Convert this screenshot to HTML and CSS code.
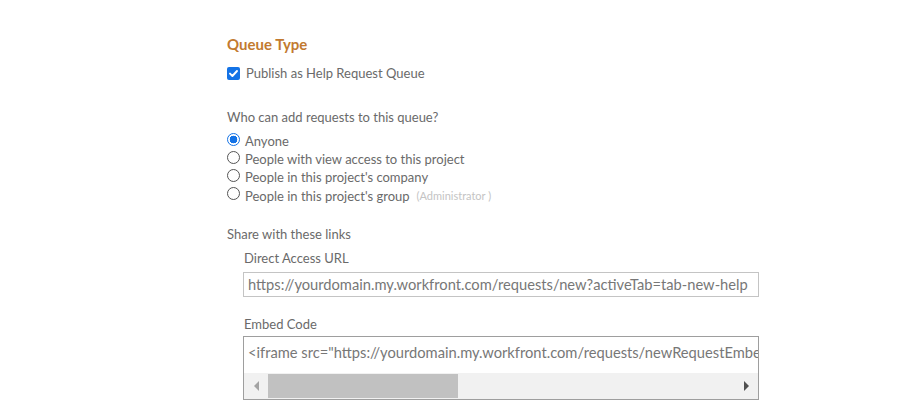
FILE: index.html
```html
<!DOCTYPE html>
<html>
<head>
<meta charset="utf-8">
<link rel="stylesheet" href="styles.css">
</head>
<body>
<div class="page">
  <h2 class="title">Queue Type</h2>
  <label class="check-row">
    <span class="checkbox"><svg width="13" height="13" viewBox="0 0 13 13"><rect x="0" y="0" width="13" height="13" rx="2" fill="#1473e6"/><path d="M3 6.6 L5.4 9 L10 4" fill="none" stroke="#fff" stroke-width="1.9" stroke-linecap="round" stroke-linejoin="round"/></svg></span>
    <span>Publish as Help Request Queue</span>
  </label>

  <div class="question">Who can add requests to this queue?</div>
  <div class="radios">
    <div class="radio-row"><span class="radio checked"></span><span>Anyone</span></div>
    <div class="radio-row"><span class="radio"></span><span>People with view access to this project</span></div>
    <div class="radio-row"><span class="radio"></span><span>People in this project's company</span></div>
    <div class="radio-row"><span class="radio"></span><span>People in this project's group</span><span class="muted">(Administrator )</span></div>
  </div>

  <div class="share">Share with these links</div>
  <div class="links">
    <div class="field-label">Direct Access URL</div>
    <div class="input">https://yourdomain.my.workfront.com/requests/new?activeTab=tab-new-help</div>
    <div class="field-label embed-label">Embed Code</div>
    <div class="textarea">
      <div class="ta-text">&lt;iframe src="https://yourdomain.my.workfront.com/requests/newRequestEmbed?activeTab=tab-new-help"&gt;&lt;/iframe&gt;</div>
      <div class="hscroll">
        <span class="arrow left"></span>
        <div class="track"><div class="thumb"></div></div>
        <span class="arrow right"></span>
      </div>
    </div>
  </div>
</div>
</body>
</html>
```
FILE: styles.css
```css
html, body {
  margin: 0;
  padding: 0;
  background: #fff;
}
body {
  font-family: Lato, "Liberation Sans", sans-serif;
  color: #6a6a6a;
  font-size: 13px;
}
.page {
  margin-left: 227px;
  width: 532px;
  padding-top: 34px;
}
.title {
  margin: 0;
  font-size: 15px;
  font-weight: 700;
  color: #c27a30;
  line-height: 20px;
}
.check-row {
  display: flex;
  align-items: center;
  gap: 6px;
  margin-top: 10px;
  line-height: 18px;
}
.checkbox {
  display: flex;
  width: 13px;
  height: 13px;
}
.question {
  margin-top: 26px;
  line-height: 18px;
}
.radios {
  margin-top: 6px;
  display: flex;
  flex-direction: column;
}
.radio-row {
  display: flex;
  align-items: center;
  gap: 6px;
  height: 18.2px;
}
.radio {
  box-sizing: border-box;
  width: 13px;
  height: 13px;
  border-radius: 50%;
  border: 1px solid #555;
  margin-top: -4px;
  margin-right: -1px;
}
.radio.checked {
  border: 1.5px solid #1473e6;
  background: radial-gradient(circle, #1473e6 0 3.6px, #fff 4.1px);
}
.muted {
  font-size: 11px;
  color: #c4c4c4;
  margin-left: 1px;
}
.share {
  margin-top: 20px;
  line-height: 18px;
}
.links {
  padding-left: 16px;
}
.field-label {
  margin-top: 6px;
  line-height: 18px;
  padding-left: 1px;
}
.input {
  box-sizing: border-box;
  margin-top: 5px;
  height: 25px;
  border: 1px solid #c4c4c4;
  padding: 0 4px;
  font-size: 14.7px;
  line-height: 23px;
  color: #777;
  white-space: nowrap;
  overflow: hidden;
}
.embed-label {
  margin-top: 18px;
}
.textarea {
  box-sizing: border-box;
  margin-top: 3px;
  height: 64px;
  border: 1px solid #9e9e9e;
  display: flex;
  flex-direction: column;
  overflow: hidden;
}
.ta-text {
  padding: 3px 4px 0;
  font-size: 14.7px;
  line-height: 24px;
  color: #777;
  white-space: nowrap;
  overflow: hidden;
  flex: 1;
}
.hscroll {
  display: flex;
  align-items: stretch;
  height: 26px;
  background: #f1f1f1;
}
.arrow {
  width: 24px;
  display: flex;
  align-items: center;
  justify-content: center;
}
.arrow::before {
  content: "";
  width: 0;
  height: 0;
  border-top: 5px solid transparent;
  border-bottom: 5px solid transparent;
}
.arrow.left::before {
  border-right: 5px solid #a3a3a3;
}
.arrow.right::before {
  border-left: 5px solid #505050;
}
.track {
  flex: 1;
  display: flex;
  align-items: stretch;
  padding: 1px 0;
}
.thumb {
  width: 190px;
  background: #c1c1c1;
}
```
